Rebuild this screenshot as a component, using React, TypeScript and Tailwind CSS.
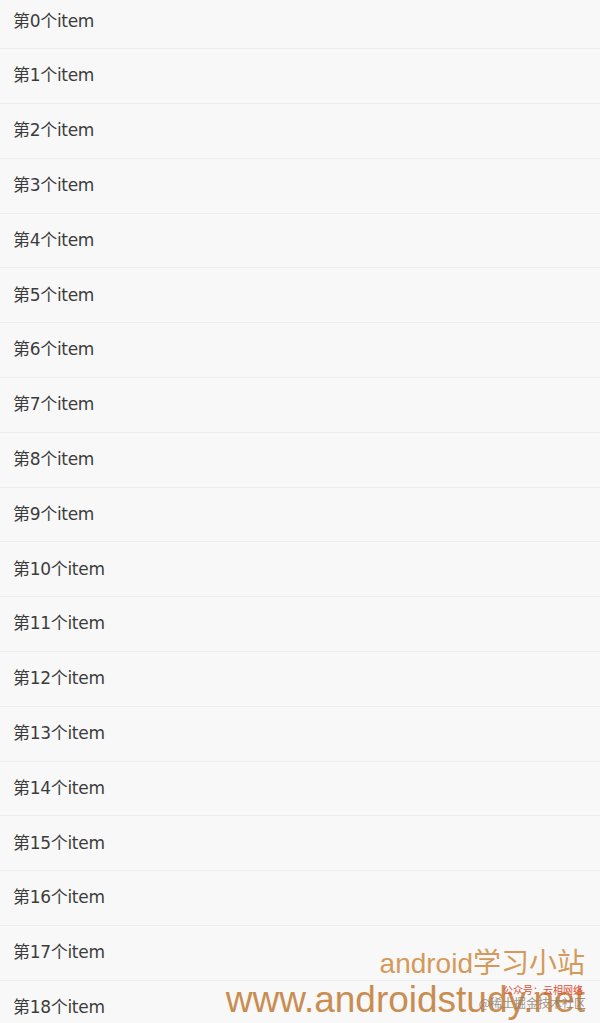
import React from "react";

const items = Array.from({ length: 20 }, (_, i) => `第${i}个item`);

const App: React.FC = () => {
  return (
    <div className="relative h-[1023px] w-[600px] overflow-hidden bg-[#f8f8f8] font-['DejaVu_Sans','Noto_Sans_CJK_SC',sans-serif]">
      {/* list */}
      <div className="-mt-[5.6px]">
        {items.map((label) => (
          <div
            key={label}
            className="flex h-[54.8px] items-center border-b border-[#ececec] pl-[13px] text-[17px] tracking-[-0.3px] text-[#3c3c3c]"
          >
            {label}
          </div>
        ))}
      </div>

      {/* watermark */}
      <div className="pointer-events-none absolute right-[15px] top-[946px] flex flex-col items-end font-['Liberation_Sans','Noto_Sans_CJK_SC',sans-serif]">
        <div className="text-[28px] leading-[35px] text-[#d49a5c]">android学习小站</div>
        <div className="-mt-[2px] text-[37px] leading-[42px] text-[#c98d52]">www.androidstudy.net</div>
      </div>
      <div className="pointer-events-none absolute right-[17px] top-[984px] font-['Noto_Sans_CJK_SC',sans-serif] text-[10px] leading-[12px] text-[#e0503a]">
        公众号：云相网络
      </div>
      <div className="pointer-events-none absolute right-[14px] top-[996px] font-['Noto_Sans_CJK_SC',sans-serif] text-[12px] leading-[14px] text-[#8a7a70]/80">
        @稀土掘金技术社区
      </div>
    </div>
  );
};

export default App;
